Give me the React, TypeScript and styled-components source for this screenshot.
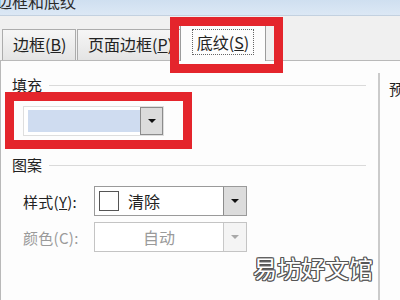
import React from "react";
import styled, { createGlobalStyle } from "styled-components";

const GlobalStyle = createGlobalStyle`
  html, body { margin: 0; padding: 0; }
  body {
    width: 400px;
    height: 300px;
    overflow: hidden;
    font-family: "Noto Sans CJK SC", "Liberation Sans", sans-serif;
  }
`;

const Window = styled.div`
  position: relative;
  width: 400px;
  height: 300px;
  overflow: hidden;
  background: #f0f0f0;
  display: flex;
  flex-direction: column;
`;

const TitleBar = styled.div`
  height: 15px;
  flex: none;
  overflow: hidden;
  background: linear-gradient(#cfdff0, #dce8f5);
  border-bottom: 1px solid #c3d1e0;
`;

const TitleText = styled.div`
  margin: -9px 0 0 -4px;
  font-size: 16px;
  line-height: 20px;
  color: #2a2a2a;
  white-space: nowrap;
`;

const TabStrip = styled.div`
  height: 45px;
  flex: none;
  display: flex;
  align-items: flex-end;
  padding-left: 2px;
  position: relative;
  z-index: 1;
`;

const Tab = styled.div<{ $w: number }>`
  box-sizing: border-box;
  width: ${(p) => p.$w}px;
  height: 31px;
  margin-right: 1px;
  margin-bottom: 1px;
  border: 1px solid #acacac;
  border-bottom: none;
  background: linear-gradient(#f6f6f6, #e4e4e4);
  font-size: 16px;
  line-height: 29px;
  color: #222;
  padding-left: 10px;
  white-space: nowrap;
  overflow: hidden;
`;

const ActiveTab = styled.div`
  box-sizing: border-box;
  width: 86px;
  height: 38px;
  margin-left: -3px;
  border: 1px solid #9c9c9c;
  border-bottom: none;
  background: #fdfdfd;
  display: flex;
  justify-content: center;
  align-items: center;
  padding-bottom: 2px;
`;

const FocusLabel = styled.span`
  border: 1px dotted #666;
  padding: 2px 4px;
  font-size: 16px;
  line-height: 20px;
  color: #222;
`;

const Key = styled.span`
  text-decoration: underline;
`;

const Panel = styled.div`
  flex: 1;
  display: flex;
  background: #fdfdfd;
  border-top: 1px solid #b9b9b9;
  border-left: 1px solid #b9b9b9;
  margin-top: -1px;
`;

const MainCol = styled.div`
  width: 377px;
  flex: none;
  box-sizing: border-box;
  padding: 13px 12px 0 11px;
  display: flex;
  flex-direction: column;
`;

const SectionHeader = styled.div<{ $mt: number }>`
  display: flex;
  align-items: center;
  height: 20px;
  margin-top: ${(p) => p.$mt}px;
  font-size: 15px;
  color: #222;
`;

const Rule = styled.div`
  flex: 1;
  height: 1px;
  margin: 3px 0 0 7px;
  background: #dadada;
`;

const FillCombo = styled.div`
  box-sizing: border-box;
  width: 141px;
  height: 30px;
  margin: 12px 0 0 11px;
  border: 1px solid #dedede;
  background: #fff;
  display: flex;
  padding: 3px 0 3px 4px;
`;

const Swatch = styled.div`
  flex: 1;
  background: #cfdcf0;
`;

const DropButton = styled.div<{ $disabled?: boolean }>`
  box-sizing: border-box;
  width: 23px;
  flex: none;
  display: flex;
  align-items: center;
  justify-content: center;
  background: ${(p) => (p.$disabled ? "#f4f4f4" : "#dcdcdc")};
  border-left: 1px solid ${(p) => (p.$disabled ? "#c8c8c8" : "#8c8c8c")};
`;

const FillButton = styled(DropButton)`
  margin: -3px 0;
  border: 1px solid #8c8c8c;
`;

const Arrow = styled.div<{ $disabled?: boolean }>`
  width: 0;
  height: 0;
  border-left: 4px solid transparent;
  border-right: 4px solid transparent;
  border-top: 4px solid ${(p) => (p.$disabled ? "#a8a8a8" : "#111")};
`;

const FieldRow = styled.div<{ $mt: number }>`
  display: flex;
  align-items: center;
  margin: ${(p) => p.$mt}px 0 0 11px;
`;

const Label = styled.div<{ $disabled?: boolean }>`
  width: 71px;
  font-size: 15px;
  letter-spacing: 0.3px;
  color: ${(p) => (p.$disabled ? "#9a9a9a" : "#222")};
  white-space: nowrap;
`;

const Select = styled.div<{ $disabled?: boolean }>`
  box-sizing: border-box;
  width: 153px;
  height: 30px;
  display: flex;
  border: 1px solid ${(p) => (p.$disabled ? "#c4c4c4" : "#9a9a9a")};
  background: #fff;
`;

const SelectBody = styled.div<{ $center?: boolean; $disabled?: boolean }>`
  flex: 1;
  display: flex;
  align-items: center;
  justify-content: ${(p) => (p.$center ? "center" : "flex-start")};
  padding-left: ${(p) => (p.$center ? 0 : 4)}px;
  font-size: 16px;
  color: ${(p) => (p.$disabled ? "#9a9a9a" : "#222")};
`;

const PatternBox = styled.div`
  box-sizing: border-box;
  width: 20px;
  height: 20px;
  border: 1px solid #555;
  background: #fff;
  margin-right: 9px;
`;

const SidePane = styled.div`
  margin-top: 12px;
  border-left: 2px solid #cbcbcb;
  padding: 5px 0 0 9px;
  font-size: 15px;
  color: #222;
`;

const Highlight = styled.div`
  position: absolute;
  box-sizing: border-box;
  border: 9px solid #e4252c;
  z-index: 5;
`;

const Watermark = styled.div`
  position: absolute;
  left: 253px;
  top: 252px;
  font-size: 24px;
  line-height: 32px;
  color: #fff;
  z-index: 6;
  text-shadow: 1px 0 0 #555, -1px 0 0 #555, 0 1px 0 #555, 0 -1px 0 #555,
    1px 1px 0 #555, -1px -1px 0 #555, 1px -1px 0 #555, -1px 1px 0 #555;
`;

export default function App() {
  return (
    <>
      <GlobalStyle />
      <Window>
        <TitleBar>
          <TitleText>边框和底纹</TitleText>
        </TitleBar>
        <TabStrip>
          <Tab $w={74}>
            边框(<Key>B</Key>)
          </Tab>
          <Tab $w={105}>
            页面边框(<Key>P</Key>)
          </Tab>
          <ActiveTab>
            <FocusLabel>
              底纹(<Key>S</Key>)
            </FocusLabel>
          </ActiveTab>
        </TabStrip>
        <Panel>
          <MainCol>
            <SectionHeader $mt={0}>
              填充
              <Rule />
            </SectionHeader>
            <FillCombo>
              <Swatch />
              <FillButton>
                <Arrow />
              </FillButton>
            </FillCombo>
            <SectionHeader $mt={18}>
              图案
              <Rule />
            </SectionHeader>
            <FieldRow $mt={12}>
              <Label>
                样式(<Key>Y</Key>):
              </Label>
              <Select>
                <SelectBody>
                  <PatternBox />
                  清除
                </SelectBody>
                <DropButton>
                  <Arrow />
                </DropButton>
              </Select>
            </FieldRow>
            <FieldRow $mt={6}>
              <Label $disabled>颜色(C):</Label>
              <Select $disabled>
                <SelectBody $center $disabled>
                  自动
                </SelectBody>
                <DropButton $disabled>
                  <Arrow $disabled />
                </DropButton>
              </Select>
            </FieldRow>
          </MainCol>
          <SidePane>预</SidePane>
        </Panel>
        <Highlight style={{ left: 170, top: 17, width: 113, height: 56 }} />
        <Highlight style={{ left: 5, top: 92, width: 187, height: 57 }} />
        <Watermark>易坊好文馆</Watermark>
      </Window>
    </>
  );
}
